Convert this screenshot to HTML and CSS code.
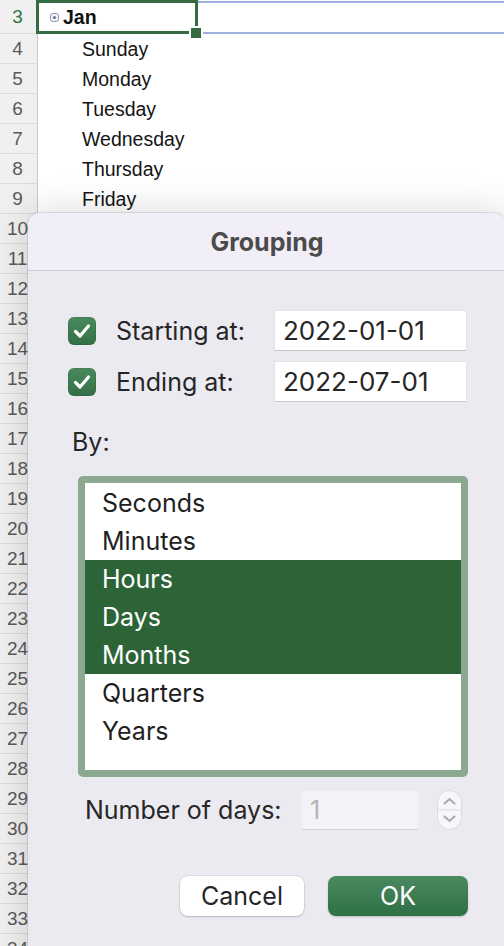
FILE: index.html
```html
<!DOCTYPE html>
<html lang="en">
<head>
<meta charset="utf-8">
<title>Grouping</title>
<link rel="stylesheet" href="styles.css">
</head>
<body>
<div class="sheet">
  <div class="row row3">
    <div class="rh rh-active">3</div>
    <div class="selcell">
      <svg class="jan-icon" width="9" height="9" viewBox="0 0 9 9"><rect x="0.5" y="0.5" width="8" height="8" rx="2" fill="#eef0f6" stroke="#8e97b3"/><circle cx="4.5" cy="4.5" r="1.6" fill="#6f7a99"/></svg>
      <span>Jan</span>
      <span class="handle"></span>
    </div>
    <div class="band"></div>
  </div>
  <div class="row"><div class="rh">4</div><div class="cell">Sunday</div></div>
  <div class="row"><div class="rh">5</div><div class="cell">Monday</div></div>
  <div class="row"><div class="rh">6</div><div class="cell">Tuesday</div></div>
  <div class="row"><div class="rh">7</div><div class="cell">Wednesday</div></div>
  <div class="row"><div class="rh">8</div><div class="cell">Thursday</div></div>
  <div class="row"><div class="rh">9</div><div class="cell">Friday</div></div>
  <div class="row"><div class="rh">10</div><div class="cell"></div></div>
  <div class="row"><div class="rh">11</div><div class="cell"></div></div>
  <div class="row"><div class="rh">12</div><div class="cell"></div></div>
  <div class="row"><div class="rh">13</div><div class="cell"></div></div>
  <div class="row"><div class="rh">14</div><div class="cell"></div></div>
  <div class="row"><div class="rh">15</div><div class="cell"></div></div>
  <div class="row"><div class="rh">16</div><div class="cell"></div></div>
  <div class="row"><div class="rh">17</div><div class="cell"></div></div>
  <div class="row"><div class="rh">18</div><div class="cell"></div></div>
  <div class="row"><div class="rh">19</div><div class="cell"></div></div>
  <div class="row"><div class="rh">20</div><div class="cell"></div></div>
  <div class="row"><div class="rh">21</div><div class="cell"></div></div>
  <div class="row"><div class="rh">22</div><div class="cell"></div></div>
  <div class="row"><div class="rh">23</div><div class="cell"></div></div>
  <div class="row"><div class="rh">24</div><div class="cell"></div></div>
  <div class="row"><div class="rh">25</div><div class="cell"></div></div>
  <div class="row"><div class="rh">26</div><div class="cell"></div></div>
  <div class="row"><div class="rh">27</div><div class="cell"></div></div>
  <div class="row"><div class="rh">28</div><div class="cell"></div></div>
  <div class="row"><div class="rh">29</div><div class="cell"></div></div>
  <div class="row"><div class="rh">30</div><div class="cell"></div></div>
  <div class="row"><div class="rh">31</div><div class="cell"></div></div>
  <div class="row"><div class="rh">32</div><div class="cell"></div></div>
  <div class="row"><div class="rh">33</div><div class="cell"></div></div>
  <div class="row"><div class="rh">34</div><div class="cell"></div></div>
</div>

<div class="dialog">
  <div class="titlebar">Grouping</div>
  <div class="dbody">
    <div class="daterow">
      <span class="cb"><svg width="28" height="28" viewBox="0 0 28 28"><path d="M7.5 14.5 L12 19 L20.5 9" fill="none" stroke="#fff" stroke-width="3.2" stroke-linecap="round" stroke-linejoin="round"/></svg></span>
      <span class="lbl">Starting at:</span>
      <span class="field">2022-01-01</span>
    </div>
    <div class="daterow second">
      <span class="cb"><svg width="28" height="28" viewBox="0 0 28 28"><path d="M7.5 14.5 L12 19 L20.5 9" fill="none" stroke="#fff" stroke-width="3.2" stroke-linecap="round" stroke-linejoin="round"/></svg></span>
      <span class="lbl">Ending at:</span>
      <span class="field">2022-07-01</span>
    </div>
    <div class="by">By:</div>
    <div class="listbox">
      <div class="item">Seconds</div>
      <div class="item">Minutes</div>
      <div class="item on">Hours</div>
      <div class="item on">Days</div>
      <div class="item on">Months</div>
      <div class="item">Quarters</div>
      <div class="item">Years</div>
    </div>
    <div class="numrow">
      <span class="numlbl">Number of days:</span>
      <span class="numfield">1</span>
      <span class="spin"><svg width="25" height="40" viewBox="0 0 25 40"><rect x="0.5" y="0.5" width="24" height="39" rx="12" fill="#f7f6f9" stroke="#dddbe1"/><line x1="1" y1="20" x2="24" y2="20" stroke="#dddbe1"/><path d="M7.5 13.5 L12.5 9 L17.5 13.5" fill="none" stroke="#a9a9ad" stroke-width="2" stroke-linecap="round"/><path d="M7.5 26.5 L12.5 31 L17.5 26.5" fill="none" stroke="#a9a9ad" stroke-width="2" stroke-linecap="round"/></svg></span>
    </div>
    <div class="buttons">
      <button class="btn cancel">Cancel</button>
      <button class="btn ok">OK</button>
    </div>
  </div>
</div>
</body>
</html>
```

FILE: styles.css
```css
html, body {
  margin: 0;
  padding: 0;
}
body {
  width: 504px;
  height: 946px;
  overflow: hidden;
  position: relative;
  background: #ffffff;
  font-family: "Liberation Sans", Arial, sans-serif;
}

/* ---------- sheet ---------- */
.sheet {
  display: flex;
  flex-direction: column;
}
.row {
  display: flex;
  height: 30px;
  flex: none;
}
.row3 {
  height: 34px;
}
.rh {
  width: 38px;
  flex: none;
  box-sizing: border-box;
  border-right: 1px solid #c9c9c9;
  border-bottom: 1px solid #dcdcdc;
  background: #f0f0f0;
  color: #5a5a5a;
  font-size: 19px;
  display: flex;
  align-items: center;
  justify-content: center;
  padding-right: 2px;
}
.rh-active {
  color: #2f7445;
}
.cell {
  flex: 1;
  font-size: 19.5px;
  color: #141414;
  padding-left: 44px;
  display: flex;
  align-items: center;
}
.selcell {
  width: 162px;
  flex: none;
  margin-left: -2px;
  box-sizing: border-box;
  border: 3px solid #346b41;
  position: relative;
  display: flex;
  align-items: center;
  padding-left: 11px;
  font-weight: bold;
  font-size: 19.5px;
  color: #111;
}
.jan-icon {
  margin-right: 4px;
  flex: none;
}
.handle {
  position: absolute;
  right: -6px;
  bottom: -7px;
  width: 10px;
  height: 10px;
  background: #346b41;
  box-shadow: 0 0 0 2px #ffffff;
}
.band {
  flex: 1;
  margin-top: 1px;
  height: 33px;
  box-sizing: border-box;
  border-top: 2px solid #9eb0dc;
  border-bottom: 2px solid #9eb0dc;
}

/* ---------- dialog ---------- */
.dialog {
  position: absolute;
  left: 28px;
  top: 213px;
  width: 478px;
  height: 760px;
  background: #eceaf1;
  border-radius: 12px;
  box-shadow: 0 0 0 1px rgba(0, 0, 0, 0.10), 0 0 40px rgba(0, 0, 0, 0.16);
  overflow: hidden;
  font-family: "Inter", "Noto Sans", sans-serif;
  color: #262626;
}
.titlebar {
  height: 58px;
  box-sizing: border-box;
  border-bottom: 1px solid #d0cdd5;
  background: #f1eef7;
  display: flex;
  align-items: center;
  justify-content: center;
  font-weight: 700;
  font-size: 25px;
  color: #4b4b4b;
}
.dbody {
  display: flex;
  flex-direction: column;
  align-items: flex-start;
  font-size: 25px;
}
.daterow {
  display: flex;
  align-items: center;
  height: 39px;
  margin-top: 40px;
  padding-left: 40px;
}
.daterow.second {
  margin-top: 12px;
}
.cb {
  width: 28px;
  height: 28px;
  border-radius: 6px;
  background: linear-gradient(#4a8a5e, #336f46);
  box-shadow: inset 0 0 0 1px rgba(0, 0, 0, 0.08);
  flex: none;
  display: flex;
  margin-right: 20px;
}
.lbl {
  width: 159px;
  flex: none;
}
.field {
  width: 191px;
  height: 39px;
  box-sizing: border-box;
  background: #ffffff;
  box-shadow: 0 1px 0 #c9c7cc, 0 0 0 0.5px #dcdadf;
  padding-left: 8px;
  display: flex;
  align-items: center;
  font-size: 26px;
}
.by {
  margin-top: 26px;
  margin-left: 44px;
  line-height: 30px;
}
.listbox {
  margin-top: 19px;
  margin-left: 50px;
  width: 390px;
  height: 301px;
  box-sizing: border-box;
  border: 7px solid #8da891;
  border-radius: 5px;
  background: #ffffff;
  padding-top: 1px;
}
.item {
  height: 38px;
  display: flex;
  align-items: center;
  padding-left: 17px;
  color: #1f1f1f;
}
.item.on {
  background: #2c6438;
  color: #ffffff;
}
.numrow {
  display: flex;
  align-items: center;
  margin-top: 13px;
  margin-left: 57px;
  height: 40px;
}
.numlbl {
  width: 217px;
  flex: none;
}
.numfield {
  width: 116px;
  height: 38px;
  box-sizing: border-box;
  background: #f4f2f7;
  box-shadow: 0 1px 0 #d4d2d7;
  color: #b3b2b6;
  padding-left: 8px;
  display: flex;
  align-items: center;
}
.spin {
  margin-left: 19px;
  display: flex;
}
.buttons {
  align-self: stretch;
  display: flex;
  justify-content: flex-end;
  gap: 24px;
  margin-top: 46px;
  padding-right: 38px;
}
.btn {
  height: 40px;
  border: none;
  border-radius: 8px;
  font-family: "Inter", "Noto Sans", sans-serif;
  font-size: 25px;
  padding: 0;
}
.cancel {
  width: 124px;
  background: #ffffff;
  color: #262626;
  box-shadow: 0 0 0 0.5px rgba(0, 0, 0, 0.12), 0 1px 2px rgba(0, 0, 0, 0.18);
}
.ok {
  width: 140px;
  background: linear-gradient(#4b8a61, #2f6f45);
  color: #ffffff;
  box-shadow: 0 1px 2px rgba(0, 0, 0, 0.2);
}
```
